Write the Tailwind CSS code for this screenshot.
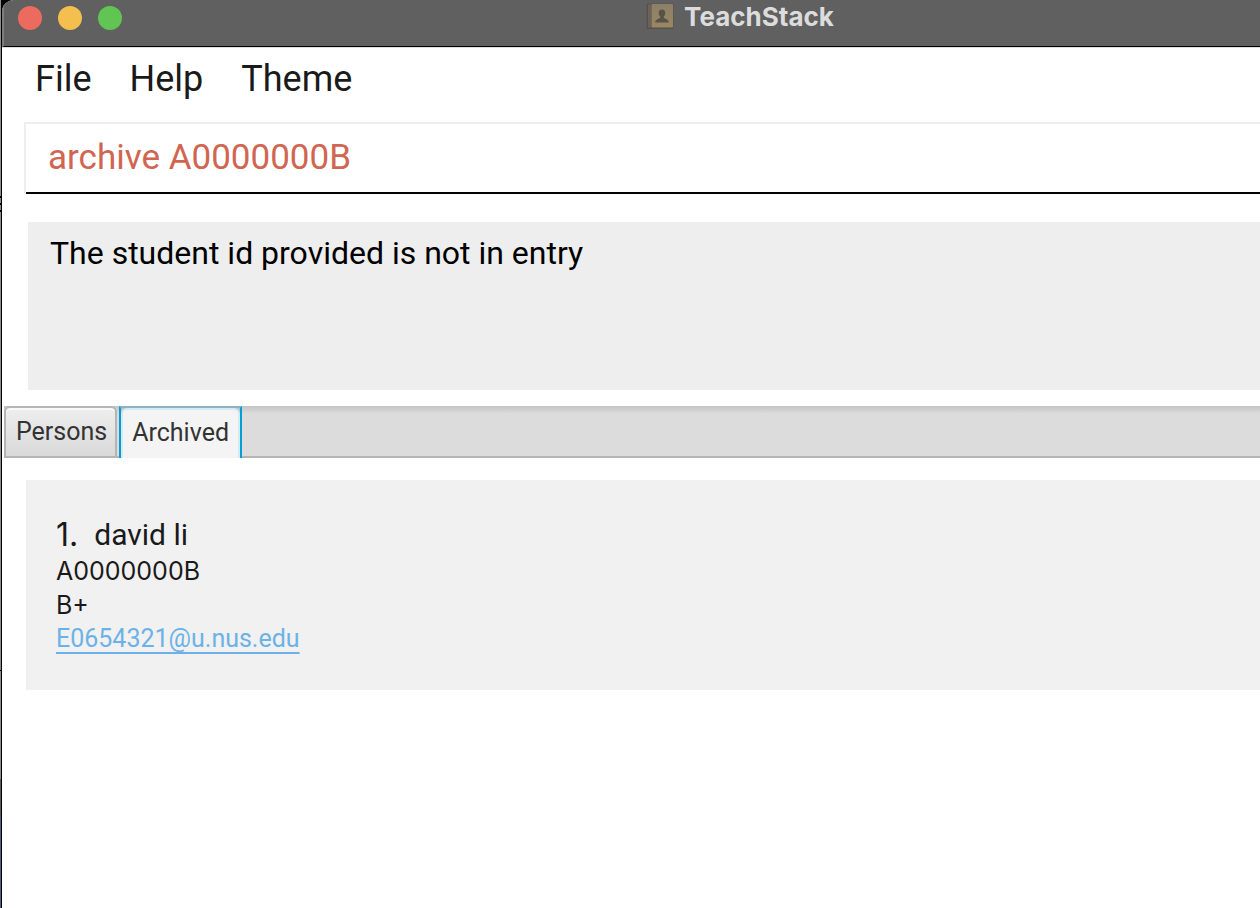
<!DOCTYPE html>
<html lang="en">
<head>
<meta charset="utf-8">
<title>TeachStack</title>
<script src="https://cdn.jsdelivr.net/npm/@tailwindcss/browser@4"></script>
</head>
<body class="flex min-h-screen bg-black font-['Roboto',sans-serif] text-[#1a1a1a]">
  <!-- Desktop visible beside the window -->
  <div class="flex w-px shrink-0 flex-col bg-[#8c8c8c]" aria-hidden="true">
    <div class="mt-[196px] h-[2px] bg-black"></div>
    <div class="mt-[5px] h-[2px] bg-black"></div>
    <div class="mt-[5px] h-[2px] bg-black"></div>
    <div class="mt-[458px] h-px bg-black"></div>
    <div class="mt-[108px] h-[36px] bg-[#5c5c5c]"></div>
    <div class="grow bg-[#4d6286]"></div>
  </div>
  <div class="ml-px flex min-w-0 grow flex-col overflow-hidden rounded-tl-xl bg-white">
    <header class="flex h-[47px] border-b border-l-2 border-b-black border-l-[#7d7d7d] bg-[#606060] pl-[14px]">
      <div class="flex gap-4 pt-[6px]">
        <button type="button" aria-label="Close" class="size-6 rounded-full bg-[#ec6a5e]"></button>
        <button type="button" aria-label="Minimize" class="size-6 rounded-full bg-[#f4bf4f]"></button>
        <button type="button" aria-label="Zoom" class="size-6 rounded-full bg-[#61c554]"></button>
      </div>
      <div class="flex grow items-start justify-center pt-px pl-[98px]">
        <svg class="mt-[2px] mr-[10px] h-[26px] w-[28px]" viewBox="0 0 28 26" aria-hidden="true">
          <defs><linearGradient id="cover" x1="0" y1="0" x2="0" y2="1"><stop offset="0" stop-color="#8d8068"/><stop offset="1" stop-color="#9a875f"/></linearGradient></defs>
          <rect x="0.5" y="0.5" width="27" height="25.5" rx="1.5" fill="#57514c"/>
          <rect x="2" y="1.5" width="3" height="23" fill="#6b625b"/>
          <rect x="5.5" y="1" width="21.5" height="23.5" rx="1" fill="url(#cover)"/>
          <path d="M16 6.500c-2.200 0-3.400 1.500-3.300 3.600.1 1.700.6 2.700 1.500 3.500v1.400c-2.200 1-4.700 1.200-5 4.500h13.600c-.3-3.300-2.800-3.500-5-4.500v-1.400c.9-.8 1.400-1.800 1.500-3.500.1-2.100-1.100-3.600-3.300-3.600z" fill="#58524b"/>
        </svg>
        <h1 class="font-['Inter',sans-serif] text-[26px] leading-8 font-bold text-[#dcdcdc]">TeachStack</h1>
      </div>
    </header>
    <nav class="flex h-[75px] items-start gap-[38px] border-t border-[#e0e0e0] pt-[9px] pl-[33px] text-[36px] leading-[44px]">
      <button type="button">File</button>
      <button type="button">Help</button>
      <button type="button">Theme</button>
    </nav>
    <div class="ml-[22px] flex h-[72px] border-t-2 border-l-2 border-[#eee]">
      <input type="text" aria-label="Command" value="archive A0000000B" class="min-w-0 grow border-b-2 border-black pl-[22px] text-[35px] text-[#d06651] outline-none">
    </div>
    <div role="status" class="mt-7 ml-[26px] h-[168px] bg-[#eee] pt-[11px] pl-[22px] text-[32px] leading-10 text-black">The student id provided is not in entry</div>
    <div role="tablist" class="mt-4 ml-[2px] flex h-[52px] bg-linear-to-b from-[#c4c4c4] via-[#dcdcdc] via-15% to-[#dcdcdc] text-[25px] text-[#333]">
      <button type="button" role="tab" aria-selected="false" class="rounded-t-md border-2 border-[#b5b5b5] bg-linear-to-b from-[#eee] to-[#d9d9d9] pr-[8px] pl-[10px] inset-shadow-[0_2px_0_#f8f8f8]">Persons</button>
      <div class="w-[2px] border-b-2 border-[#b5b5b5]"></div>
      <button type="button" role="tab" aria-selected="true" class="border-x-2 border-t-2 border-x-[#039ed3] border-t-[#8ab4c2] bg-[#b5c5ca]">
        <span class="flex h-full items-center rounded-t-md border-x-2 border-t-2 border-[#d5ebf3] bg-[#f4f4f4] px-[9px] pb-[2px]">Archived</span>
      </button>
      <div class="grow border-b-2 border-[#b5b5b5]"></div>
    </div>
    <main class="pt-[22px] pl-6">
      <article class="h-[210px] bg-[#f1f1f1] pt-[36px] pl-[30px] text-[25px] leading-[34px]">
        <h2 class="flex gap-4 text-[30px] leading-[38px]"><span class="font-['Inter',sans-serif] text-[32px]">1.</span><span>david li</span></h2>
        <p class="font-['Inter',sans-serif]">A0000000B</p>
        <p class="font-['Inter',sans-serif]">B+</p>
        <a href="mailto:E0654321@u.nus.edu" class="text-[#6db2e6] underline [text-decoration-skip-ink:none] underline-offset-[5px]">E0654321@u.nus.edu</a>
      </article>
    </main>
  </div>
</body>
</html>
